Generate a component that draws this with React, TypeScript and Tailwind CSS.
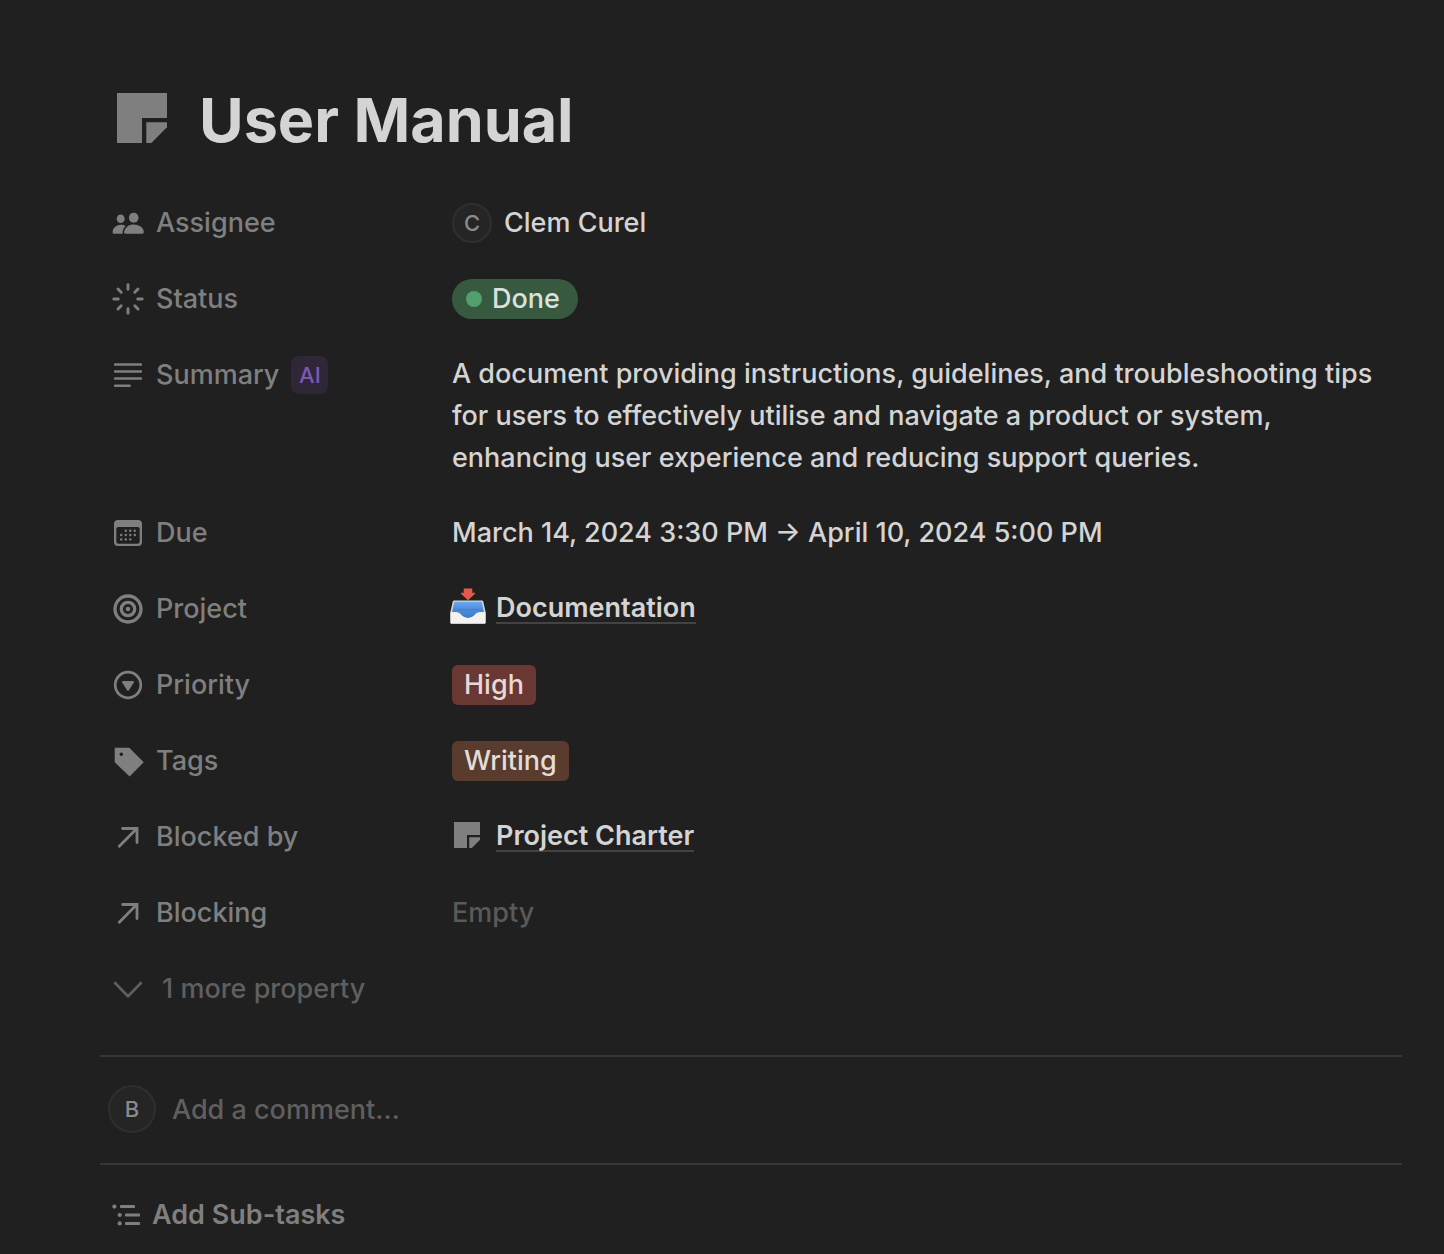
import type { ReactNode } from "react";

function Glyph({ children }: { children: ReactNode }) {
  return (
    <svg viewBox="0 0 32 32" className="size-8 shrink-0" fill="none" aria-hidden="true">
      {children}
    </svg>
  );
}

const stroke = {
  stroke: "currentColor",
  strokeWidth: 2.7,
  strokeLinecap: "round" as const,
  strokeLinejoin: "round" as const,
};

function PeopleIcon() {
  return (
    <Glyph>
      <g fill="currentColor">
        <ellipse cx="8.7" cy="11.7" rx="4" ry="4.3" />
        <ellipse cx="21.7" cy="10.7" rx="4.8" ry="5" />
        <path d="M12 27c-.3-2.800.9-5.600 3.400-7.600C16.900 18 19.200 17.400 22 17.400c5.800 0 9.800 3.800 9.800 7.400 0 1.400-.7 2-2 2H13.800c-1.200 0-1.700-.5-1.800-1.200z" />
        <path d="M10.700 26.800H2.300C1.200 26.800.6 26.200.6 25.200c0-3.400 3.300-7.400 8.100-7.400 2 0 3.600.5 4.900 1.400-2.300 2-3.400 4.700-2.900 7.600z" />
      </g>
    </Glyph>
  );
}

function StatusIcon() {
  return (
    <Glyph>
      <path
        {...stroke}
        strokeWidth={2.9}
        d="M16 1.800V6.300M16 25.700v4.500M1.800 16h4.500M25.700 16h4.500M6 6l3.200 3.200M22.800 22.800l3.200 3.200M6 26l3.200-3.200M22.800 9.200l3.200-3.200"
      />
    </Glyph>
  );
}

function TextIcon() {
  return (
    <Glyph>
      <path {...stroke} strokeWidth={2.5} d="M3.100 5.500h25.800M3.100 12.600h25.800M3.100 19.600h25.800M3.100 26.700h14.500" />
    </Glyph>
  );
}

function CalendarIcon() {
  const dots = [
    [13.8, 13.7], [18.3, 13.7], [22.8, 13.7],
    [9.2, 18], [13.8, 18], [18.3, 18], [22.8, 18],
    [9.2, 22.4], [13.8, 22.4], [18.3, 22.4],
  ];
  return (
    <Glyph>
      <path
        fill="currentColor"
        fillRule="evenodd"
        d="M6 3h20a4 4 0 0 1 4 4v18a4 4 0 0 1-4 4H6a4 4 0 0 1-4-4V7a4 4 0 0 1 4-4zM6.200 10A1.900 1.900 0 0 0 4.300 11.900V24.500a2.200 2.200 0 0 0 2.200 2.200h19a2.200 2.200 0 0 0 2.200-2.200V11.900A1.900 1.900 0 0 0 25.800 10z"
      />
      {dots.map(([x, y]) => (
        <circle key={`${x}-${y}`} cx={x} cy={y} r="1.200" fill="currentColor" />
      ))}
    </Glyph>
  );
}

function TargetIcon() {
  return (
    <Glyph>
      <circle cx="16" cy="16" r="13" stroke="currentColor" strokeWidth="3.300" />
      <circle cx="16" cy="16" r="6.700" stroke="currentColor" strokeWidth="3.300" />
      <circle cx="16" cy="16" r="2.300" fill="currentColor" />
    </Glyph>
  );
}

function SelectIcon() {
  return (
    <Glyph>
      <circle cx="16" cy="16" r="12.800" stroke="currentColor" strokeWidth="2.700" />
      <path fill="currentColor" d="M11 12h10c.9 0 1.300.8.8 1.600l-5 7.800c-.4.6-1.200.6-1.600 0l-5-7.800c-.5-.8-.1-1.600.8-1.600z" />
    </Glyph>
  );
}

function TagIcon() {
  return (
    <Glyph>
      <path
        fill="currentColor"
        fillRule="evenodd"
        d="M2.700 2.700H17.300L31.700 17.200 17.600 31.400 2.700 17.300zM9.300 7.500a1.800 1.800 0 1 0 0 3.600 1.800 1.800 0 0 0 0-3.600z"
      />
    </Glyph>
  );
}

function ArrowIcon() {
  return (
    <Glyph>
      <path {...stroke} strokeWidth={2.8} d="M7.300 25.300 24.800 7.500M10.600 7.500H25V21.600" strokeLinejoin="miter" />
    </Glyph>
  );
}

function ChevronIcon() {
  return (
    <Glyph>
      <path {...stroke} d="M3.100 10 16 23.200 28.900 10" />
    </Glyph>
  );
}

function SubtaskIcon() {
  return (
    <Glyph>
      <g fill="currentColor">
        <circle cx="2.400" cy="7.600" r="2.100" />
        <circle cx="7.700" cy="16" r="2.100" />
        <circle cx="7.700" cy="24.400" r="2.100" />
        <rect x="8" y="6" width="15" height="3" rx=".8" />
        <rect x="13" y="14.500" width="15" height="3" rx=".8" />
        <rect x="13" y="23" width="15" height="3" rx=".8" />
      </g>
    </Glyph>
  );
}

function NoteIcon({ className }: { className: string }) {
  return (
    <svg viewBox="0 0 50 50" className={className} fill="#7f7f7f" aria-hidden="true">
      <path d="M0 0h50v25H25v25H0z" />
      <path d="M29.300 29.300H50v5L34.300 50h-5z" />
    </svg>
  );
}

function InboxIcon() {
  return (
    <svg viewBox="0 0 36 36" className="size-9 shrink-0" aria-hidden="true">
      <defs>
        <linearGradient id="tray" x1="0" y1="0" x2="0" y2="1">
          <stop offset="0" stopColor="#6aa9f3" />
          <stop offset=".45" stopColor="#4e8edc" />
          <stop offset="1" stopColor="#3f7dca" />
        </linearGradient>
      </defs>
      <path fill="#d9d8d2" d="M4 12.600h28c.6 0 1 .3 1.200.9L35.600 24v10.400c0 .8-.5 1.300-1.300 1.300H1.700c-.8 0-1.300-.5-1.300-1.300V24l2.400-10.500c.2-.6.600-.9 1.200-.9z" />
      <path fill="url(#tray)" d="M4.300 13.700h27.400l2.300 10.400c-4.800 0-6.400.4-8.600 2.500-2.300 2.200-4.400 3.400-7.400 3.400s-5.100-1.200-7.400-3.400c-2.200-2.100-3.800-2.500-8.600-2.500z" />
      <path fill="#3a73bd" opacity=".55" d="M3.200 21.500h29.600v.9H3.200z" />
      <path fill="#f3f2ee" d="M.5 24.300h6c2 0 3 .9 4.300 2.300 2 2.200 4.200 3.500 7.200 3.500s5.200-1.300 7.200-3.500c1.300-1.400 2.300-2.300 4.300-2.300h6v10c0 .8-.4 1.200-1.200 1.200H1.700c-.8 0-1.200-.4-1.200-1.200z" />
      <path fill="#e5584b" d="M14.200.6h7.600c.3 0 .5.200.5.500v3.700h2.300c.5 0 .7.500.4.900l-6.400 6c-.4.300-.8.300-1.200 0L11 5.700c-.3-.4-.1-.9.4-.9h2.300V1.100c0-.3.200-.5.500-.5z" />
    </svg>
  );
}

function Property({ icon, label, badge, children }: { icon: ReactNode; label: string; badge?: string; children: ReactNode }) {
  return (
    <div className="flex items-start">
      <dt className="flex h-[68px] w-[340px] shrink-0 items-center gap-3 pl-3 text-[#7f7f7f]">
        {icon}
        <span>{label}</span>
        {badge && (
          <span className="flex h-[38px] w-[37px] items-center justify-center rounded-lg bg-[#2f2637] text-[22px] text-[#7d57b5]">
            {badge}
          </span>
        )}
      </dt>
      <dd className="flex min-h-[68px] min-w-0 flex-1 items-center pl-3">{children}</dd>
    </div>
  );
}

function PageLink({ children }: { children: ReactNode }) {
  return (
    <a href="#" className="border-b-2 border-[#434343] leading-7 font-semibold">
      {children}
    </a>
  );
}

export default function App() {
  return (
    <main className="min-h-screen bg-[#202020] pt-[78px] pr-[42px] pl-[100px] font-['Inter',sans-serif] text-[27px] leading-[42px] font-[450] text-[#d4d4d4]">
      <header className="flex items-center gap-8 pl-[17px]">
        <NoteIcon className="size-[50px] shrink-0" />
        <h1 className="pt-1 text-[61px] leading-[76px] font-bold">User Manual</h1>
      </header>

      <dl className="mt-[31px] flex flex-col gap-2">
        <Property icon={<PeopleIcon />} label="Assignee">
          <span className="flex items-center gap-3">
            <span className="flex size-10 items-center justify-center rounded-full border-2 border-[#2f2f2f] bg-[#252525] text-[22px] text-[#8a8a8a]">
              C
            </span>
            Clem Curel
          </span>
        </Property>
        <Property icon={<StatusIcon />} label="Status">
          <span className="flex h-10 items-center gap-[10px] rounded-full bg-[#36593f] pr-[18px] pl-[14px] text-[#dbe2dd]">
            <span className="size-4 rounded-full bg-[#529e6e]" />
            Done
          </span>
        </Property>
        <Property icon={<TextIcon />} label="Summary" badge="AI">
          <p className="py-3">
            A document providing instructions, guidelines, and troubleshooting tips for users to effectively utilise and
            navigate a product or system, enhancing user experience and reducing support queries.
          </p>
        </Property>
        <Property icon={<CalendarIcon />} label="Due">
          March 14, 2024 3:30 PM → April 10, 2024 5:00 PM
        </Property>
        <Property icon={<TargetIcon />} label="Project">
          <span className="-ml-0.5 flex items-end gap-[10px] pb-1.5">
            <InboxIcon />
            <PageLink>Documentation</PageLink>
          </span>
        </Property>
        <Property icon={<SelectIcon />} label="Priority">
          <span className="flex h-10 items-center rounded-md bg-[#693833] px-3 text-[#e5dad9]">High</span>
        </Property>
        <Property icon={<TagIcon />} label="Tags">
          <span className="flex h-10 items-center rounded-md bg-[#593c2e] px-3 text-[#e3dcd8]">Writing</span>
        </Property>
        <Property icon={<ArrowIcon />} label="Blocked by">
          <span className="flex items-start gap-4 pl-0.5">
            <NoteIcon className="size-[26px] shrink-0" />
            <PageLink>Project Charter</PageLink>
          </span>
        </Property>
        <Property icon={<ArrowIcon />} label="Blocking">
          <span className="text-[#5a5a5a]">Empty</span>
        </Property>
      </dl>

      <button type="button" className="mt-2 flex h-[68px] items-center gap-[18px] pl-3 text-[#5f5f5f]">
        <ChevronIcon />
        1 more property
      </button>

      <form className="mt-8 flex items-center gap-4 border-y-2 border-[#373737] pt-7 pb-[30px] pl-2">
        <span className="flex size-12 shrink-0 items-center justify-center rounded-full border-2 border-[#2f2f2f] bg-[#252525] text-[22px] font-medium text-[#8a8a8a]">
          B
        </span>
        <input
          type="text"
          aria-label="Add a comment"
          placeholder="Add a comment…"
          className="h-12 min-w-0 flex-1 bg-transparent outline-none placeholder:text-[#5f5f5f]"
        />
      </form>

      <button type="button" className="mt-4 flex h-[68px] items-center gap-2 pl-3 font-semibold text-[#7f7f7f]">
        <SubtaskIcon />
        Add Sub-tasks
      </button>
    </main>
  );
}
